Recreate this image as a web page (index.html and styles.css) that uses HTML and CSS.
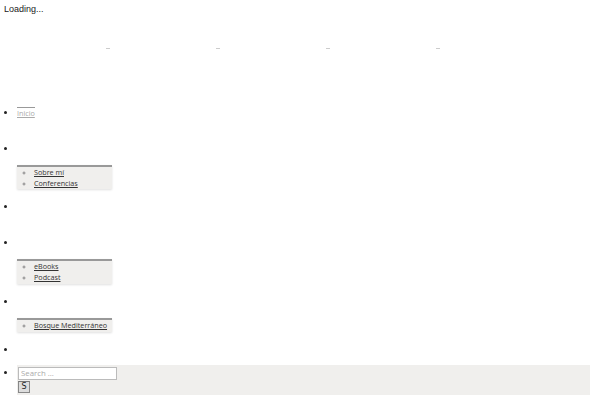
FILE: index.html
```html
<!DOCTYPE html>
<html lang="es">

<head>
    <meta charset="UTF-8">
    <meta name="viewport" content="width=device-width, initial-scale=1.0">
    <title>Inicio</title>
    <link rel="stylesheet" href="styles.css">
</head>

<body>
    <div class="loader">Loading...</div>

    <!-- marcadores del slider -->
    <div class="slider-dots">
        <span class="dot"><i></i></span>
        <span class="dot"><i></i></span>
        <span class="dot"><i></i></span>
        <span class="dot"><i></i></span>
    </div>

    <ul class="menu">
        <li class="menu-item"><a href="#" class="current">Inicio</a></li>
        <li class="menu-item has-sub">
            <a href="#"></a>
            <ul class="sub-menu">
                <li><a href="#">Sobre mí</a></li>
                <li><a href="#">Conferencias</a></li>
            </ul>
        </li>
        <li class="menu-item"><a href="#"></a></li>
        <li class="menu-item has-sub">
            <a href="#"></a>
            <ul class="sub-menu padded">
                <li><a href="#">eBooks</a></li>
                <li><a href="#">Podcast</a></li>
            </ul>
        </li>
        <li class="menu-item has-sub">
            <a href="#"></a>
            <ul class="sub-menu padded">
                <li><a href="#">Bosque Mediterráneo</a></li>
            </ul>
        </li>
        <li class="menu-item last"><a href="#"></a></li>
        <li class="menu-search">
            <form class="search-form" action="/" method="get">
                <input type="search" class="search-field" placeholder="Search ...">
                <button type="submit" class="search-btn">S</button>
            </form>
        </li>
    </ul>
</body>

</html>
```

FILE: styles.css
```css
body {
    margin: 0;
    padding: 0;
    font-family: "Open Sans", "Noto Sans", sans-serif;
    font-size: 7.2px;
    color: #333;
    background: #fff;
}

.loader {
    font-family: "Liberation Sans", Arial, sans-serif;
    font-size: 9px;
    color: #222;
    padding: 4px 4px 0;
    height: 12px;
}

/* marcadores */
.slider-dots {
    display: flex;
    padding-left: 53px;
    margin-top: 29px;
    height: 6px;
}

.dot {
    width: 110px;
    display: flex;
    justify-content: center;
    align-items: center;
}

.dot i {
    display: block;
    width: 4px;
    height: 1px;
    background: #ccc;
}

.menu {
    list-style: disc;
    margin: 56px 0 0;
    padding-left: 17px;
    font-size: 7.2px;
    line-height: 11px;
}

.menu-item {
    min-height: 11px;
    padding-bottom: 24px;
}

/* hueco para que el marcador tenga línea */
.menu-item > a:empty::before {
    content: "\200b";
}

.menu-item::marker {
    font-size: 8px;
    color: #222;
}

.menu-item.has-sub {
    padding-bottom: 12px;
}

.menu-item.has-sub > a {
    display: block;
    height: 11px;
    margin-bottom: 10px;
}

.menu-item.last {
    padding-bottom: 9px;
}

.menu a {
    color: #333;
}

.menu a.current {
    color: #aaa;
    border-top: 1px solid #999;
}

.sub-menu {
    list-style: circle;
    width: 78px;
    margin: 0;
    padding: 0 0 0 17px;
    background: #f0efed;
    border-top: 2px solid #999;
    box-shadow: 0 1px 2px rgba(0, 0, 0, 0.12);
}

.sub-menu.padded {
    padding-bottom: 1px;
}

.sub-menu li::marker {
    color: #888;
    font-size: 7px;
}

.sub-menu a {
    color: #333;
}

.menu-search {
    background: #f0efed;
    width: 573px;
    height: 30px;
    padding-top: 1px;
    box-sizing: border-box;
    line-height: 13px;
}

.menu-search::marker {
    font-size: 8px;
    color: #222;
}

.search-form {
    display: flex;
    flex-direction: column;
    align-items: flex-start;
    margin: 0;
}

.search-field {
    width: 99px;
    height: 13px;
    box-sizing: border-box;
    margin: 0 0 0 1px;
    padding: 0 2px;
    border: 1px solid #bbb;
    background: #fff;
    font-family: "Open Sans", "Noto Sans", sans-serif;
    font-size: 7.8px;
    color: #333;
    outline: none;
}

.search-field::placeholder {
    color: #aaa;
}

.search-btn {
    width: 12px;
    height: 12px;
    margin: 1px 0 0 1px;
    padding: 0;
    border: 1px solid #888;
    border-top-color: #777;
    background: #ddd;
    font-family: "DejaVu Sans", sans-serif;
    font-size: 8px;
    line-height: 10px;
    color: #222;
}
```
